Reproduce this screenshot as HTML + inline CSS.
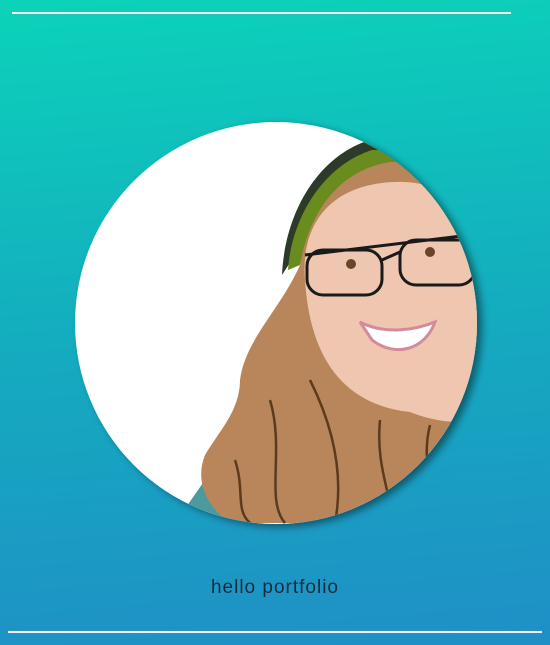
<!DOCTYPE html>
<html><head><meta charset="utf-8"><style>
html,body{margin:0;padding:0}
body{width:550px;height:645px;overflow:hidden;background:linear-gradient(175deg,#0bd3b9 0%,#14acbf 50%,#1f8fc6 100%);position:relative;font-family:"Liberation Sans",sans-serif}
.l{position:absolute;height:2px;background:#eee;box-shadow:0 0 1px #888}
.t{position:absolute;top:577px;left:0;width:550px;text-align:center;font-size:19px;color:#1a2a3a;letter-spacing:1px}
svg{position:absolute;left:0;top:0}
</style></head><body>
<div class="l" style="left:12px;top:12px;width:499px"></div>
<div class="l" style="left:8px;top:631px;width:534px"></div>
<svg width="550" height="645" viewBox="0 0 550 645">
<defs>
<clipPath id="c"><circle cx="276" cy="323" r="201"/></clipPath>
<filter id="s" x="-20%" y="-20%" width="140%" height="140%"><feDropShadow dx="5" dy="3" stdDeviation="4" flood-color="#000" flood-opacity="0.45"/></filter>
</defs>
<circle cx="276" cy="323" r="201" fill="#fff" filter="url(#s)"/>
<g clip-path="url(#c)">
<path d="M175 523 L205 480 L235 450 L255 470 L245 523Z" fill="#4d9a9e"/>
<path d="M282 275 C285 210 320 155 370 140 L420 135 L480 150 L480 200 L330 200 Z" fill="#2d3a2a"/>
<path d="M288 270 C292 215 325 165 372 150 L400 150 L395 175 C350 180 310 220 300 265Z" fill="#6a8c1e"/>
<path d="M300 265 C310 210 340 170 390 162 L480 160 L480 523 L230 523 C205 505 195 480 205 455 C220 430 240 410 240 380 C245 340 280 310 300 265Z" fill="#b8865a"/>
<path d="M305 280 C300 215 340 180 405 182 C455 185 478 215 480 250 L480 420 C455 425 430 420 410 412 C345 405 310 360 305 280Z" fill="#efc7b1"/>
<path d="M310 380 C330 420 345 470 335 523 M270 400 C285 450 265 500 285 523 M430 425 C420 465 435 500 445 523 M235 460 C245 490 235 510 250 523 M380 420 C375 470 395 500 390 523" stroke="#5c3a1e" stroke-width="2.5" fill="none"/>
<path d="M360 322 C385 335 415 330 435 322 C425 350 395 358 372 340Z" fill="#fff" stroke="#d48a9a" stroke-width="3"/>
<g fill="none" stroke="#1a1a1a" stroke-width="3">
<rect x="307" y="250" width="75" height="45" rx="16"/>
<rect x="400" y="240" width="75" height="45" rx="16"/>
<path d="M305 255 L470 235 M382 260 L400 252"/>
</g>
<circle cx="351" cy="264" r="5" fill="#6a4426"/>
<circle cx="430" cy="252" r="5" fill="#6a4426"/>
</g>
</svg>
<div class="t">hello portfolio</div>
</body></html>
